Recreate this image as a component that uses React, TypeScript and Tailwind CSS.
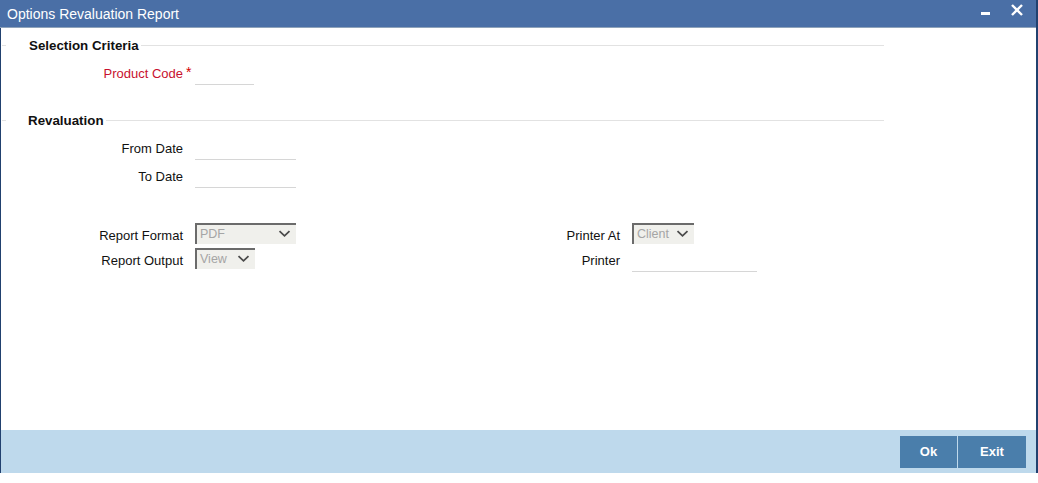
import React from "react";

function Chevron() {
  return (
    <svg width="13" height="8" viewBox="0 0 13 8" className="shrink-0 mt-[5px]">
      <polyline points="1.5,1.2 6.5,5.8 11.5,1.2" fill="none" stroke="#4a4a4a" strokeWidth="1.8" />
    </svg>
  );
}

function Select({ value, w }: { value: string; w: string }) {
  return (
    <div
      className={`${w} h-[21px] bg-[#f0f0ec] border-l-2 border-t-2 border-[#6b6b6b] flex items-start justify-between pl-[3px] pr-[5px] text-[12.5px] leading-[14px] text-[#a5a5a5]`}
    >
      <span className="mt-[2px]">{value}</span>
      <Chevron />
    </div>
  );
}

function Legend({ text, pl }: { text: string; pl: string }) {
  return (
    <div className="w-[883px] h-[16px] flex items-center">
      <div className="ml-[1px] w-[4px] h-px bg-[#e2e2e2]" />
      <span className={`${pl} pr-[2px] pt-[2px] font-bold text-[13.33px] leading-[16px]`}>{text}</span>
      <div className="flex-1 h-px bg-[#e2e2e2]" />
    </div>
  );
}

export default function App() {
  return (
    <div className="w-[1038px] h-[483px] bg-white font-['Liberation_Sans',Arial,sans-serif] text-[13px] text-[#111] overflow-hidden">
      <div className="h-[473px] flex flex-col border-r-2 border-[#21416f]">
        {/* Title bar */}
        <div className="h-[28px] shrink-0 bg-[#4a6fa6] border-b border-[#8fa3ba] flex items-start pl-[7px] pr-[13px] text-white">
          <span className="mt-[6px] text-[14px] leading-[16px]">Options Revaluation Report</span>
          <div className="flex-1" />
          <div className="mt-[12px] w-[9px] h-[3px] bg-white" />
          <svg width="12" height="12" viewBox="0 0 12 12" className="ml-[21px] mt-[4px]">
            <line x1="1" y1="1" x2="11" y2="11" stroke="white" strokeWidth="2.4" />
            <line x1="11" y1="1" x2="1" y2="11" stroke="white" strokeWidth="2.4" />
          </svg>
        </div>

        {/* Body */}
        <div className="flex-1 border-l border-[#21416f] flex flex-col">
          <div className="mt-[9px]">
            <Legend text="Selection Criteria" pl="pl-[23px]" />
          </div>

          <div className="mt-[12px] flex h-[20px]">
            <div className="w-[182px] text-right leading-[18px] text-[#c8102e]">Product Code</div>
            <div className="w-[12px] relative">
              <span className="absolute left-[3px] top-[-1px] text-[14px] leading-[16px] text-[#d40000]">*</span>
            </div>
            <div className="w-[59px] h-[20px] border-b border-[#d6d6d6]" />
          </div>

          <div className="mt-[27px]">
            <Legend text="Revaluation" pl="pl-[22px]" />
          </div>

          <div className="mt-[12px] flex h-[20px]">
            <div className="w-[182px] text-right leading-[18px]">From Date</div>
            <div className="ml-[12px] w-[101px] h-[20px] border-b border-[#d6d6d6]" />
          </div>
          <div className="mt-[8px] flex h-[20px]">
            <div className="w-[182px] text-right leading-[18px]">To Date</div>
            <div className="ml-[12px] w-[101px] h-[20px] border-b border-[#d6d6d6]" />
          </div>

          <div className="mt-[35px] flex">
            <div className="w-[437px] flex flex-col">
              <div className="flex h-[21px]">
                <div className="w-[182px] mt-[5px] text-right leading-[16px]">Report Format</div>
                <div className="ml-[12px]">
                  <Select value="PDF" w="w-[101px]" />
                </div>
              </div>
              <div className="mt-[4px] flex h-[21px]">
                <div className="w-[182px] mt-[5px] text-right leading-[16px]">Report Output</div>
                <div className="ml-[12px]">
                  <Select value="View" w="w-[60px]" />
                </div>
              </div>
            </div>
            <div className="flex flex-col">
              <div className="flex h-[21px]">
                <div className="w-[182px] mt-[5px] text-right leading-[16px]">Printer At</div>
                <div className="ml-[12px]">
                  <Select value="Client" w="w-[62px]" />
                </div>
              </div>
              <div className="mt-[4px] flex h-[24px]">
                <div className="w-[182px] mt-[5px] text-right leading-[16px]">Printer</div>
                <div className="ml-[12px] w-[125px] h-[24px] border-b border-[#d6d6d6]" />
              </div>
            </div>
          </div>
        </div>

        {/* Footer */}
        <div className="h-[43px] shrink-0 bg-[#bed9ec] border-l border-[#21416f] flex justify-end items-start pt-[6px] pr-[10px]">
          <div className="w-[57px] h-[32px] bg-[#4a7eab] text-white font-bold flex items-center justify-center">Ok</div>
          <div className="ml-[1px] w-[68px] h-[32px] bg-[#4a7eab] text-white font-bold flex items-center justify-center">Exit</div>
        </div>
      </div>
    </div>
  );
}
